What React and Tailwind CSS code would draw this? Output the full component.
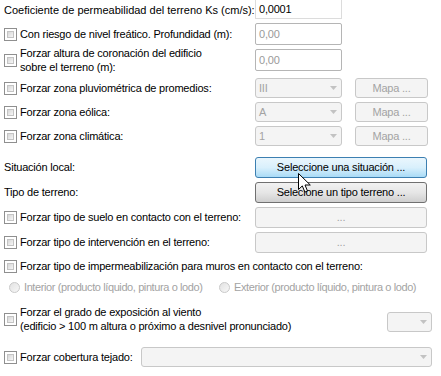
import React from "react";

function Check() {
  return (
    <span className="w-[13px] h-[13px] shrink-0 border border-[#8f8f8f] bg-white p-[2px] flex">
      <span className="flex-1 border border-[#c4c4c4] bg-gradient-to-br from-[#d7d7d7] to-[#f6f6f6]" />
    </span>
  );
}

function Radio() {
  return (
    <span className="w-[11px] h-[11px] shrink-0 rounded-full border border-[#c9c9c9] bg-gradient-to-br from-[#e2e2e2] to-[#f7f7f7]" />
  );
}

function Arrow() {
  return (
    <svg width="7" height="4" viewBox="0 0 7 4" className="shrink-0">
      <path d="M0 0h7L3.5 4z" fill="#c2c2c2" />
    </svg>
  );
}

function Select({ value, className = "" }) {
  return (
    <div className={`h-[20px] rounded-[3px] border border-[#c8c8c8] bg-[#f4f4f4] flex items-center pl-[3px] pr-[4px] text-[#a3a3a3] ${className}`}>
      <span className="flex-1">{value}</span>
      <Arrow />
    </div>
  );
}

function MapaBtn() {
  return (
    <div className="w-[73px] h-[20px] ml-[13px] rounded-[3px] border border-[#c8c8c8] bg-[#f4f4f4] flex items-center justify-center text-[#a3a3a3]">
      Mapa ...
    </div>
  );
}

function Label({ check, children }) {
  return (
    <div className="w-[255px] flex items-center gap-[3px] pl-[4px]">
      {check && <Check />}
      <span className="leading-[14px]">{children}</span>
    </div>
  );
}

function Cursor() {
  return (
    <svg width="13" height="21" viewBox="0 0 13 21" className="absolute left-[42px] top-[15px]">
      <path d="M0.5 0.5v16l3.8-3.6 2.6 6.2 2.6-1.1-2.5-6h5.3z" fill="#fff" stroke="#000" strokeWidth="1" strokeLinejoin="round" />
    </svg>
  );
}

export default function App() {
  return (
    <div className="w-[441px] h-[376px] bg-white text-black text-[11px] tracking-[-0.2px] whitespace-nowrap overflow-hidden relative" style={{ fontFamily: '"Liberation Sans", Arial, sans-serif' }}>
      <div className="flex flex-col">
        <div className="h-[19px] flex items-center">
          <Label><span className="tracking-normal">Coeficiente de permeabilidad del terreno Ks (cm/s):</span></Label>
          <div className="w-[87px] h-[19px] border border-t-0 border-[#dcdcdc] flex items-center pl-[3px]">0,0001</div>
        </div>
        <div className="h-[22px] mt-[4px] flex items-center">
          <Label check>Con riesgo de nivel freático. Profundidad (m):</Label>
          <div className="w-[87px] h-[22px] rounded-[2px] border border-[#b5b5b5] flex items-center pl-[3px] text-[#9a9a9a]">0,00</div>
        </div>
        <div className="h-[22px] mt-[4px] flex items-center">
          <Label check>Forzar altura de coronación del edificio<br />sobre el terreno (m):</Label>
          <div className="w-[87px] h-[22px] rounded-[2px] border border-[#b5b5b5] flex items-center pl-[3px] text-[#9a9a9a]">0,00</div>
        </div>
        <div className="h-[20px] mt-[7px] flex items-center">
          <Label check>Forzar zona pluviométrica de promedios:</Label>
          <Select value="III" className="w-[87px]" />
          <MapaBtn />
        </div>
        <div className="h-[20px] mt-[4px] flex items-center">
          <Label check>Forzar zona eólica:</Label>
          <Select value="A" className="w-[87px]" />
          <MapaBtn />
        </div>
        <div className="h-[20px] mt-[4px] flex items-center">
          <Label check>Forzar zona climática:</Label>
          <Select value="1" className="w-[87px]" />
          <MapaBtn />
        </div>
        <div className="h-[20px] mt-[11px] flex items-center">
          <Label>Situación local:</Label>
          <div className="relative w-[172px] h-[21px] rounded-[3px] border border-[#3c7fb1] bg-gradient-to-b from-[#eaf6fd] via-[#d9f0fc] to-[#a9dbf6] flex items-center justify-center">
            Seleccione una situación ...
            <Cursor />
          </div>
        </div>
        <div className="h-[20px] mt-[5px] flex items-center">
          <Label>Tipo de terreno:</Label>
          <div className="w-[172px] h-[21px] rounded-[3px] border border-[#707070] bg-gradient-to-b from-[#f2f2f2] via-[#e6e6e6] to-[#cfcfcf] flex items-center justify-center">
            Selecione un tipo terreno ...
          </div>
        </div>
        <div className="h-[20px] mt-[5px] flex items-center">
          <Label check>Forzar tipo de suelo en contacto con el terreno:</Label>
          <div className="w-[172px] h-[21px] rounded-[3px] border border-[#c8c8c8] bg-[#f4f4f4] flex items-center justify-center text-[#a3a3a3]">...</div>
        </div>
        <div className="h-[20px] mt-[5px] flex items-center">
          <Label check>Forzar tipo de intervención en el terreno:</Label>
          <div className="w-[172px] h-[21px] rounded-[3px] border border-[#c8c8c8] bg-[#f4f4f4] flex items-center justify-center text-[#a3a3a3]">...</div>
        </div>
        <div className="h-[14px] mt-[7px] flex items-center">
          <div className="flex items-center gap-[3px] pl-[4px]">
            <Check />
            <span>Forzar tipo de impermeabilización para muros en contacto con el terreno:</span>
          </div>
        </div>
        <div className="h-[14px] mt-[7px] flex items-center text-[#a3a3a3]">
          <div className="w-[219px] flex items-center gap-[4px] pl-[9px]">
            <Radio />
            <span className="tracking-[-0.4px]">Interior (producto líquido, pintura o lodo)</span>
          </div>
          <div className="flex items-center gap-[4px]">
            <Radio />
            <span className="tracking-[-0.4px]">Exterior (producto líquido, pintura o lodo)</span>
          </div>
        </div>
        <div className="h-[28px] mt-[11px] flex items-start">
          <div className="flex-1 flex items-center gap-[3px] pl-[4px]">
            <Check />
            <span className="leading-[14px]">Forzar el grado de exposición al viento<br />(edificio &gt; 100 m altura o próximo a desnivel pronunciado)</span>
          </div>
          <Select value="" className="w-[45px] mt-[7px] mr-[9px]" />
        </div>
        <div className="h-[20px] mt-[14px] flex items-center">
          <div className="w-[141px] flex items-center gap-[3px] pl-[4px]">
            <Check />
            <span>Forzar cobertura tejado:</span>
          </div>
          <Select value="" className="w-[291px]" />
        </div>
      </div>
    </div>
  );
}
